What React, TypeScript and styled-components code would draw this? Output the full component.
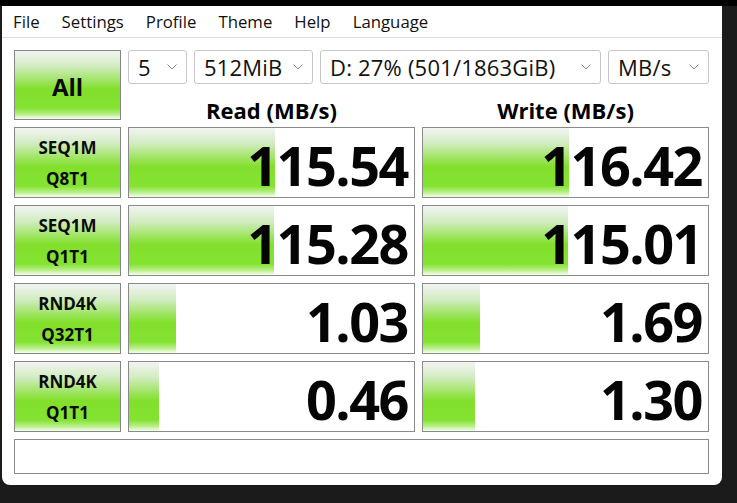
import React from 'react';
import styled, { createGlobalStyle } from 'styled-components';

const Global = createGlobalStyle`
  html, body { margin: 0; padding: 0; background: #1b1b1b; }
  body { width: 737px; height: 503px; overflow: hidden; font-family: "Open Sans", "Noto Sans", sans-serif; color: #000; }
  * { box-sizing: border-box; }
`;

const Desktop = styled.div`
  width: 737px;
  height: 503px;
  border-top: 6px solid #000;
  padding-left: 2px;
  background: #1b1b1b;
`;

const Window = styled.div`
  width: 720px;
  height: 479px;
  background: #fff;
  border-radius: 0 0 8px 8px;
  display: flex;
  flex-direction: column;
`;

const MenuBar = styled.div`
  height: 32px;
  border-bottom: 1px solid #dcdcdc;
  display: flex;
  align-items: center;
`;

const MenuItem = styled.span`
  font-size: 16.8px;
  padding: 0 11px;
  line-height: 28px;
  color: #111;
`;

const Board = styled.div`
  display: grid;
  grid-template-columns: 107px 287px 287px;
  grid-template-rows: 70px repeat(4, 71px) 35px;
  gap: 7px;
  padding: 12px 12px 0 12px;
`;

const greenGrad = `linear-gradient(to bottom, #f2f4f2 0%, #d2ecc2 22%, #9ee460 44%, #82e02c 56%, #84e232 84%, #b8ef88 93%, #f6fdf0 100%)`;

const GreenButton = styled.div<{ $big?: boolean }>`
  border: 1px solid #868686;
  background: ${greenGrad};
  display: flex;
  flex-direction: column;
  align-items: center;
  justify-content: center;
  font-weight: 700;
  font-size: ${p => (p.$big ? '24px' : '17px')};
  line-height: ${p => (p.$big ? '30px' : '31px')};
  color: #0a0a0a;
  padding-top: ${p => (p.$big ? '4px' : '1px')};
`;

const Controls = styled.div`
  grid-column: 2 / 4;
  display: flex;
  flex-direction: column;
`;

const SelectRow = styled.div`
  display: flex;
  gap: 7px;
  height: 34px;
`;

const Select = styled.div<{ $w: number }>`
  width: ${p => p.$w}px;
  height: 34px;
  border: 1px solid #c6c6c6;
  border-radius: 3px;
  display: flex;
  align-items: center;
  justify-content: space-between;
  padding: 0 9px 0 9px;
  font-size: 22px;
  letter-spacing: 0.2px;
  color: #111;
  background: #fff;
  white-space: nowrap;
`;

const Chevron = () => (
  <svg width="10" height="6" viewBox="0 0 10 6">
    <polyline points="0.5,0.5 5,5 9.5,0.5" fill="none" stroke="#8a8a8a" strokeWidth="1" />
  </svg>
);

const Headers = styled.div`
  display: grid;
  grid-template-columns: 287px 287px;
  gap: 7px;
  padding-top: 12px;
`;

const Header = styled.div`
  text-align: center;
  font-weight: 700;
  font-size: 22px;
  line-height: 28px;
`;

const Cell = styled.div`
  position: relative;
  border: 1px solid #8a8a8a;
  background: #fff;
  display: flex;
  align-items: center;
  justify-content: flex-end;
  padding-right: 6px;
`;

const Bar = styled.div`
  position: absolute;
  left: 0;
  top: 0;
  bottom: 0;
  background: ${greenGrad};
`;

const Value = styled.span`
  position: relative;
  font-weight: 700;
  font-size: 54px;
  line-height: 54px;
  letter-spacing: -1.5px;
  margin-top: 4px;
  color: #050505;
`;

const Status = styled.div`
  grid-column: 1 / -1;
  border: 1px solid #8a8a8a;
  background: #fff;
`;

const rows = [
  { l1: 'SEQ1M', l2: 'Q8T1', r: '115.54', rw: 146, w: '116.42', ww: 146 },
  { l1: 'SEQ1M', l2: 'Q1T1', r: '115.28', rw: 145, w: '115.01', ww: 145 },
  { l1: 'RND4K', l2: 'Q32T1', r: '1.03', rw: 47, w: '1.69', ww: 57 },
  { l1: 'RND4K', l2: 'Q1T1', r: '0.46', rw: 30, w: '1.30', ww: 52 },
];

const menus = ['File', 'Settings', 'Profile', 'Theme', 'Help', 'Language'];

export default function App() {
  return (
    <>
      <Global />
      <Desktop>
        <Window>
          <MenuBar>
            {menus.map(m => (
              <MenuItem key={m}>{m}</MenuItem>
            ))}
          </MenuBar>
          <Board>
            <GreenButton $big>All</GreenButton>
            <Controls>
              <SelectRow>
                <Select $w={59}>5<Chevron /></Select>
                <Select $w={119}>512MiB<Chevron /></Select>
                <Select $w={281}>D: 27% (501/1863GiB)<Chevron /></Select>
                <Select $w={101}>MB/s<Chevron /></Select>
              </SelectRow>
              <Headers>
                <Header>Read (MB/s)</Header>
                <Header>Write (MB/s)</Header>
              </Headers>
            </Controls>
            {rows.map((r, i) => (
              <React.Fragment key={i}>
                <GreenButton>
                  <span>{r.l1}</span>
                  <span>{r.l2}</span>
                </GreenButton>
                <Cell>
                  <Bar style={{ width: `${(r.rw / 285) * 100}%` }} />
                  <Value>{r.r}</Value>
                </Cell>
                <Cell>
                  <Bar style={{ width: `${(r.ww / 285) * 100}%` }} />
                  <Value>{r.w}</Value>
                </Cell>
              </React.Fragment>
            ))}
            <Status />
          </Board>
        </Window>
      </Desktop>
    </>
  );
}
